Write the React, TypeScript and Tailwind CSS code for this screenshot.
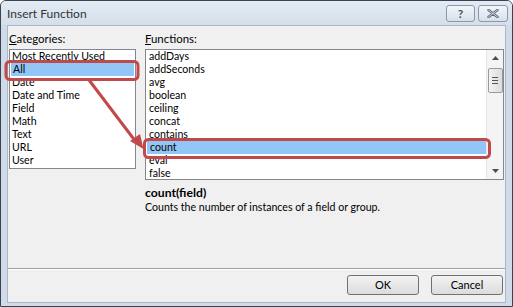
import React from "react";

const categories = ["Most Recently Used", "All", "Date", "Date and Time", "Field", "Math", "Text", "URL", "User"];
const functions = ["addDays", "addSeconds", "avg", "boolean", "ceiling", "concat", "contains", "count", "eval", "false"];

function ScrollArrow({ up }: { up?: boolean }) {
  return (
    <svg width="7" height="4" viewBox="0 0 7 4">
      {up ? <path d="M0 4 L3.5 0 L7 4 Z" fill="#4d4d4d" /> : <path d="M0 0 L3.5 4 L7 0 Z" fill="#4d4d4d" />}
    </svg>
  );
}

export default function App() {
  return (
    <div
      className="relative w-[513px] h-[307px] overflow-hidden bg-[#cfdbe8] border border-[#3b4250] rounded-t-[6px] flex flex-col"
      style={{ fontFamily: 'Lato, "Liberation Sans", Arial, sans-serif' }}
    >
      {/* title bar */}
      <div className="h-[24px] flex items-start pl-[6px] pr-[4px] bg-gradient-to-b from-[#e3ebf4] to-[#d4dfeb]">
        <span className="mt-[6px] text-[12px] leading-[14px] text-[#333]">Insert Function</span>
        <div className="ml-auto mt-[4px] flex gap-[3px]">
          <div className="w-[29px] h-[17px] rounded-[3px] border border-[#8b98aa] bg-gradient-to-b from-[#f3f6fa] to-[#d6e0eb] flex items-center justify-center text-[12px] font-bold text-[#4a5566]">
            ?
          </div>
          <div className="w-[30px] h-[17px] rounded-[3px] border border-[#8b98aa] bg-gradient-to-b from-[#f3f6fa] to-[#d6e0eb] flex items-center justify-center">
            <svg width="12" height="9" viewBox="0 0 12 9">
              <path d="M1.5 1 L10.5 8 M10.5 1 L1.5 8" stroke="#5a6577" strokeWidth="2.4" strokeLinecap="round" />
              <path d="M1.5 1 L10.5 8 M10.5 1 L1.5 8" stroke="#eef2f7" strokeWidth="0.8" strokeLinecap="round" />
            </svg>
          </div>
        </div>
      </div>

      {/* client area */}
      <div className="ml-[6px] mr-[6px] mb-[3px] flex-1 border border-[#aab7c7] bg-[#f0f0f0] flex flex-col text-[10.6px] text-black">
        <div className="flex pl-[1px] pt-[6px] gap-[9px]">
          <div className="flex flex-col w-[127px]">
            <div className="h-[17px] leading-[14px] text-[11.4px]">
              <span className="underline underline-offset-1">C</span>ategories:
            </div>
            <div className="h-[120px] border border-[#828790] bg-white overflow-hidden">
              {categories.map((c, i) => (
                <div
                  key={c}
                  className={`h-[13px] leading-[13px] pl-[2px] whitespace-nowrap ${i === 1 ? "bg-[#92c6f6] mx-[1px] pl-[1px]" : ""}`}
                >
                  {c}
                </div>
              ))}
            </div>
          </div>
          <div className="flex flex-col w-[359px]">
            <div className="h-[17px] leading-[14px] text-[11.4px]">
              <span className="underline underline-offset-1">F</span>unctions:
            </div>
            <div className="h-[131px] border border-[#828790] bg-white flex overflow-hidden">
              <div className="flex-1 pt-0">
                {functions.map((f, i) => (
                  <div
                    key={f}
                    className={`h-[13px] leading-[13px] pl-[3px] whitespace-nowrap ${i === 7 ? "bg-[#92c6f6] ml-[1px] pl-[2px]" : ""}`}
                  >
                    {f}
                  </div>
                ))}
              </div>
              <div className="w-[17px] bg-[#f4f4f4] border-l border-[#e6e6e6] flex flex-col items-center">
                <div className="h-[16px] flex items-center justify-center">
                  <ScrollArrow up />
                </div>
                <div className="mt-[2px] w-[15px] h-[25px] rounded-[2px] border border-[#9b9b9b] bg-gradient-to-r from-[#f2f2f2] to-[#dcdcdc] flex flex-col items-center justify-center gap-[2px]">
                  <div className="w-[6px] h-[1px] bg-[#555]" />
                  <div className="w-[6px] h-[1px] bg-[#555]" />
                  <div className="w-[6px] h-[1px] bg-[#555]" />
                </div>
                <div className="mt-auto h-[16px] flex items-center justify-center">
                  <ScrollArrow />
                </div>
              </div>
            </div>
            <div className="mt-[5px] h-[15px] leading-[15px] font-bold text-[12.2px]">count(field)</div>
            <div className="h-[15px] leading-[15px]">Counts the number of instances of a field or group.</div>
          </div>
        </div>

        <div className="mt-auto">
          <div className="h-[1px] bg-[#a0a0a0] mx-[0px]" />
          <div className="h-[1px] bg-white" />
          <div className="flex justify-end gap-[12px] pt-[5px] pb-[7px] pr-[2px]">
            <button className="w-[72px] h-[20px] rounded-[3px] border border-[#707070] bg-gradient-to-b from-[#f3f3f3] to-[#dcdcdc] text-[11px] leading-[18px] text-black">
              OK
            </button>
            <button className="w-[72px] h-[20px] rounded-[3px] border border-[#707070] bg-gradient-to-b from-[#f3f3f3] to-[#dcdcdc] text-[11px] leading-[18px] text-black">
              Cancel
            </button>
          </div>
        </div>
      </div>

      {/* annotation overlay */}
      <svg className="absolute left-0 top-0 pointer-events-none" width="513" height="307" viewBox="0 0 513 307">
        <rect x="5" y="60.5" width="132" height="18" rx="4" fill="none" stroke="#c2494b" strokeWidth="3" />
        <rect x="143.5" y="138.5" width="345" height="18" rx="4" fill="none" stroke="#c2494b" strokeWidth="3" />
        <path d="M88 79 L135 141" stroke="#c2494b" strokeWidth="3" />
        <path d="M142.5 148 L129 140 L139 133 Z" fill="#c2494b" />
      </svg>
    </div>
  );
}
